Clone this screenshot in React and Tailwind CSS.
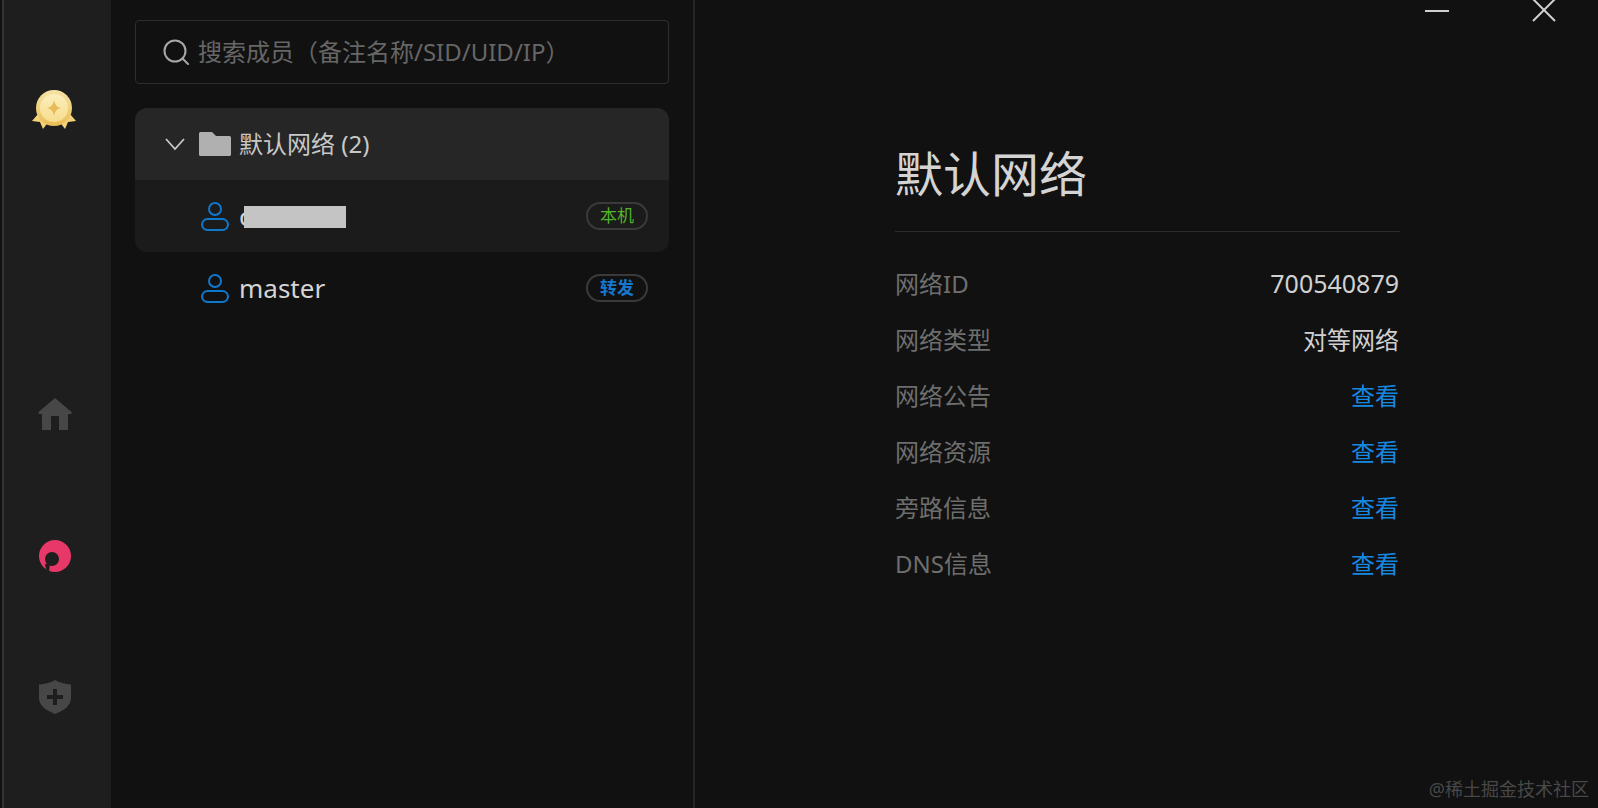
import React from 'react';

const FONT = "font-['Noto_Sans','Noto_Sans_CJK_SC',sans-serif]";

const Medal = () => (
  <svg width="46" height="42" viewBox="0 0 46 42">
    <defs>
      <linearGradient id="rim" x1="0" y1="0" x2="0" y2="1">
        <stop offset="0" stopColor="#f6e3a6" />
        <stop offset="1" stopColor="#e9bd55" />
      </linearGradient>
      <linearGradient id="face" x1="0" y1="0" x2="0" y2="1">
        <stop offset="0" stopColor="#fbeebc" />
        <stop offset="1" stopColor="#f7dd8e" />
      </linearGradient>
    </defs>
    <path d="M7 25 L1 32 L9 33 L12 40 L18 32 Z" fill="#f3d27a" />
    <path d="M39 25 L45 32 L37 33 L34 40 L28 32 Z" fill="#f3d27a" />
    <circle cx="23" cy="19" r="18" fill="url(#rim)" />
    <circle cx="23" cy="19" r="14" fill="url(#face)" />
    <path d="M23 11 Q24 18 30 19 Q24 20 23 27 Q22 20 16 19 Q22 18 23 11 Z" fill="#e6bb58" />
  </svg>
);

const HomeIcon = () => (
  <svg width="34" height="32" viewBox="0 0 34 32" fill="#474747">
    <path d="M17 0 L33.5 14 V16 H30 V32 H21 V18 H13 V32 H4 V16 H0.5 V14 Z" />
  </svg>
);

const RingIcon = () => (
  <svg width="32" height="32" viewBox="0 0 32 32">
    <circle cx="16" cy="16" r="16" fill="#e8386a" />
    <circle cx="13" cy="19" r="7" fill="#1e1e1e" />
    <path d="M6 24 L11 23 L10 32 L7 29 Z" fill="#1e1e1e" />
  </svg>
);

const ShieldIcon = () => (
  <svg width="32" height="34" viewBox="0 0 32 34">
    <path d="M16 0 C20 2.5 26 4 32 4.5 V18 C32 26 24 31 16 34 C8 31 0 26 0 18 V4.5 C6 4 12 2.5 16 0 Z" fill="#474747" />
    <path d="M14 9 H18 V15 H24 V19 H18 V25 H14 V19 H8 V15 H14 Z" fill="#1e1e1e" />
  </svg>
);

const SearchIcon = () => (
  <svg width="26" height="26" viewBox="0 0 26 26" fill="none" stroke="#a8a8a8" strokeWidth="2">
    <circle cx="12" cy="12" r="10.5" />
    <path d="M19.5 19.5 L25 25" strokeLinecap="round" />
  </svg>
);

const FolderIcon = () => (
  <svg width="32" height="24" viewBox="0 0 32 24" fill="#b0b0b0">
    <path d="M1.5 0 H13 L17 4 H30.5 Q32 4 32 5.5 V22.5 Q32 24 30.5 24 H1.5 Q0 24 0 22.5 V1.5 Q0 0 1.5 0 Z" />
  </svg>
);

const UserIcon = () => (
  <svg width="28" height="30" viewBox="0 0 28 30" fill="none" stroke="#0f77cc" strokeWidth="2">
    <circle cx="14" cy="8" r="6" />
    <rect x="1" y="18" width="26" height="11" rx="5.5" />
  </svg>
);

const Badge = ({ color, children }) => (
  <span className={`flex h-[28px] w-[62px] items-center justify-center rounded-full border-2 border-[#3a3a3a] text-[17px] ${color}`}>
    {children}
  </span>
);

const Member = ({ active, name, badge, badgeColor, redacted }) => (
  <div className={`relative flex h-[72px] items-center pl-[66px] pr-[21px] ${active ? 'rounded-b-xl bg-[#1b1b1b]' : ''}`}>
    <UserIcon />
    <span className="ml-[10px] flex-1 pt-[1px] text-[26px] text-[#d4d4d4]">{name}</span>
    {redacted && <div className="absolute left-[109px] top-[26px] h-[22px] w-[102px] bg-[#c4c4c4]" />}
    <Badge color={badgeColor}>{badge}</Badge>
  </div>
);

const InfoRow = ({ label, value, link }) => (
  <div className="flex h-[56px] items-center justify-between pr-[1px] text-[24px]">
    <span className="text-[#6e6e6e]">{label}</span>
    <span className={link ? 'text-[#1688e0]' : 'text-[#d0d0d0]'}>{value}</span>
  </div>
);

export default function App() {
  return (
    <div className={`relative flex h-[808px] w-[1598px] overflow-hidden bg-[#111111] ${FONT}`}>
      {/* Nav rail */}
      <aside className="ml-[2px] flex w-[109px] shrink-0 flex-col items-center border-l-2 border-l-[#333333] bg-[#1e1e1e] pr-[8px] pt-[89px]">
        <Medal />
        <div className="mt-[267px] ml-[2px]"><HomeIcon /></div>
        <div className="mt-[110px] ml-[2px]"><RingIcon /></div>
        <div className="mt-[108px] ml-[2px]"><ShieldIcon /></div>
      </aside>

      {/* Member list */}
      <section className="w-[584px] shrink-0 border-r-2 border-r-[#262626] pl-[24px] pr-[24px] pt-[20px]">
        <div className="flex h-[64px] w-[534px] items-center rounded border border-[#2e2e2e] pl-[27px]">
          <SearchIcon />
          <span className="ml-[9px] text-[24px] text-[#666666]">搜索成员（备注名称/SID/UID/IP）</span>
        </div>
        <div className="mt-[24px] w-[534px]">
          <div className="flex h-[72px] items-center rounded-t-xl bg-[#262626] pl-[30px]">
            <svg width="20" height="12" viewBox="0 0 20 12" fill="none" stroke="#c8c8c8" strokeWidth="1.8">
              <path d="M1 1 L10 11 L19 1" />
            </svg>
            <span className="ml-[14px]"><FolderIcon /></span>
            <span className="ml-[8px] text-[24px] text-[#c8c8c8]">默认网络 (2)</span>
          </div>
          <Member active redacted name="c" badge="本机" badgeColor="text-[#52b52a]" />
          <Member name="master" badge="转发" badgeColor="text-[#1677cc] font-bold" />
        </div>
      </section>

      {/* Network details */}
      <main className="relative flex-1 pl-[200px] pt-[140px]">
        <div className="w-[505px]">
          <h1 className="h-[92px] border-b border-[#2c2c2c] text-[48px] leading-[68px] font-normal text-[#d4d4d4]">默认网络</h1>
          <div className="mt-[24px]">
            <InfoRow label="网络ID" value={<span className="text-[25px]">700540879</span>} />
            <InfoRow label="网络类型" value="对等网络" />
            <InfoRow label="网络公告" value="查看" link />
            <InfoRow label="网络资源" value="查看" link />
            <InfoRow label="旁路信息" value="查看" link />
            <InfoRow label="DNS信息" value="查看" link />
          </div>
        </div>

        {/* Window controls */}
        <div className="absolute left-[730px] top-[10px] h-[2px] w-[24px] bg-[#d0d0d0]" />
        <svg className="absolute left-[837px] top-0" width="24" height="24" viewBox="0 0 24 24" stroke="#d0d0d0" strokeWidth="2">
          <path d="M1 -1 L23 21 M23 -1 L1 21" />
        </svg>
      </main>

      <span className="absolute right-[9px] bottom-[5px] text-[18px] text-[#484848]">@稀土掘金技术社区</span>
    </div>
  );
}
